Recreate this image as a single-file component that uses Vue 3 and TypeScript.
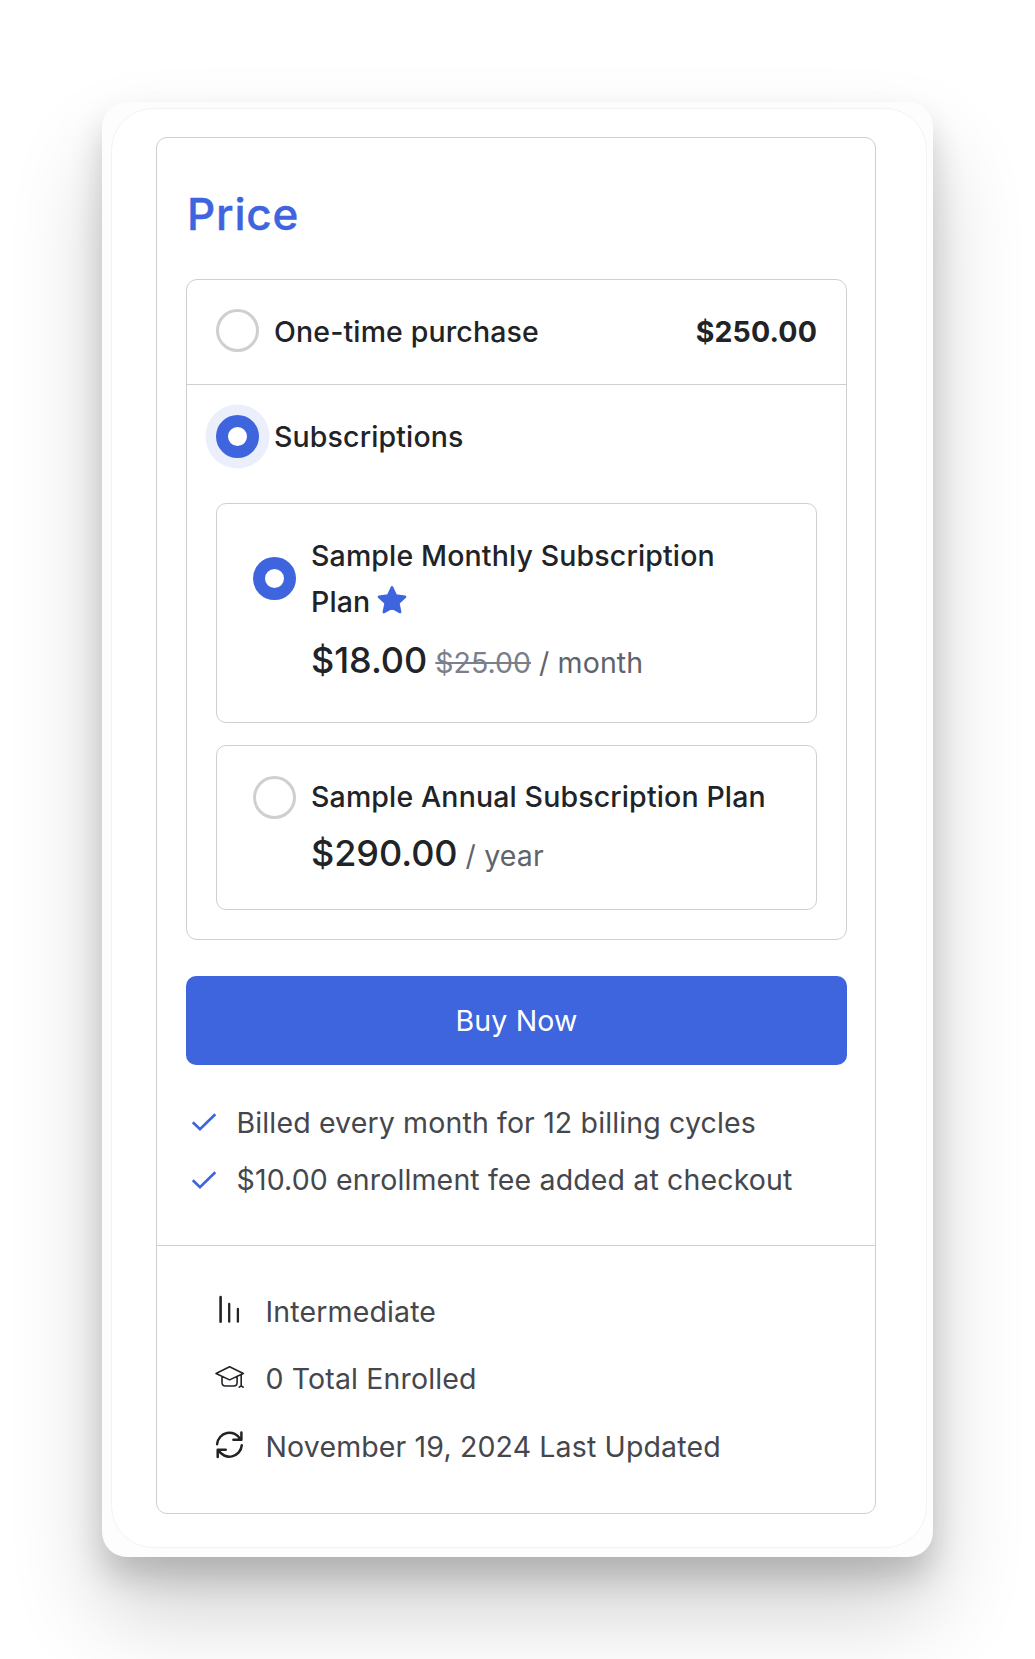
<script setup lang="ts">
import { ref } from 'vue'

interface Plan {
  id: string
  name: string
  price: string
  regular?: string
  period: string
  featured?: boolean
}

const plans: Plan[] = [
  { id: 'monthly', name: 'Sample Monthly Subscription Plan', price: '$18.00', regular: '$25.00', period: 'month', featured: true },
  { id: 'annual', name: 'Sample Annual Subscription Plan', price: '$290.00', period: 'year' },
]
const notes: string[] = ['Billed every month for 12 billing cycles', '$10.00 enrollment fee added at checkout']
const mode = ref<'once' | 'subscription'>('subscription')
const selected = ref('monthly')
</script>

<template>
  <main class="page">
    <div class="frame">
      <div class="surface">
        <section class="panel">
          <div class="pricing">
            <h2 class="title">Price</h2>
            <div class="options">
              <div class="option once" @click="mode = 'once'">
                <span class="radio" :class="{ on: mode === 'once' }"></span>
                <span class="label">One-time purchase</span>
                <strong class="amount">$250.00</strong>
              </div>
              <div class="option sub" @click="mode = 'subscription'">
                <span class="radio halo" :class="{ on: mode === 'subscription' }"></span>
                <span class="label">Subscriptions</span>
              </div>
              <div class="plans">
                <div v-for="p in plans" :key="p.id" class="plan" :class="p.id" @click="selected = p.id">
                  <span class="radio" :class="{ on: selected === p.id }"></span>
                  <div class="details">
                    <div class="name">
                      {{ p.name }}
                      <svg v-if="p.featured" class="star" viewBox="0 0 28 28">
                        <path d="M14 2.2 17.6 9.9 26.2 11 19.9 16.8 21.6 25.3 14 21.2 6.4 25.3 8.1 16.8 1.8 11 10.4 9.9Z" />
                      </svg>
                    </div>
                    <div class="cost"><span class="price">{{ p.price }}</span> <span v-if="p.regular" class="regular">{{ p.regular }}</span> <span class="period">/ {{ p.period }}</span></div>
                  </div>
                </div>
              </div>
            </div>
            <button class="buy" type="button">Buy Now</button>
            <ul class="notes">
              <li v-for="n in notes" :key="n">
                <svg class="check" viewBox="0 0 26 20"><path d="M1.8 10.2 9 17.2 24.3 2.2" /></svg>
                <span>{{ n }}</span>
              </li>
            </ul>
          </div>
          <ul class="meta">
            <li>
              <svg class="icon" viewBox="0 0 30 30">
                <path d="M5.6 2.1V26.7" stroke-width="2.6" />
                <path d="M14.2 8.9V26.7M22.9 14V26.7" stroke-width="2.3" />
              </svg>
              <span>Intermediate</span>
            </li>
            <li>
              <svg class="icon" viewBox="0 0 30 30">
                <path d="M1 11.5 14.6 4.8 28.3 11.5 14.6 17.9ZM7 14.4V20.6Q7 24 10.5 24H18.7Q22.1 24 22.1 20.6V14.4M26.2 12.6V23.9M24.3 25.2 26.2 23.8 28.1 25.2" stroke-width="1.6" />
              </svg>
              <span>0 Total Enrolled</span>
            </li>
            <li>
              <svg class="icon" viewBox="0 0 30 30">
                <path d="M2.1 14.2A12.4 12.4 0 0 1 25.4 9.3M26.4 2.6V9.7H18.4M26.8 15.2A12.4 12.4 0 0 1 3.5 20.1M2.7 26.9V19.7H10.7" stroke-width="2.5" />
              </svg>
              <span>November 19, 2024 Last Updated</span>
            </li>
          </ul>
        </section>
      </div>
    </div>
  </main>
</template>

<style>
body {
  background: #fff;
  overflow: hidden;
}
</style>

<style scoped>
* {
  box-sizing: border-box;
}
.page {
  width: 1035px;
  height: 1659px;
  padding: 102px 102px;
  overflow: hidden;
  font-family: Inter, "Liberation Sans", sans-serif;
  font-size: 28.5px;
  line-height: 46px;
  letter-spacing: 0.14px;
  color: #212327;
}
.frame {
  width: 831px;
  height: 1455px;
  padding: 6px 6px 9px 9px;
  border-radius: 25px;
  background: #fdfdfd;
  box-shadow: 0 20px 32px rgba(0, 0, 0, 0.17), 0 54px 92px rgba(0, 0, 0, 0.19);
}
.surface {
  height: 1440px;
  padding: 29px 0 0 45px;
  border: 1px solid #f3f3f3;
  border-radius: 42px;
  background: #fff;
}
.panel {
  width: 720px;
  height: 1377px;
  margin-left: -1px;
  margin-top: -1px;
  border: 1px solid #cdcfd3;
  border-radius: 11px;
}
.pricing {
  height: 1108px;
  padding: 47px 28px 0 29px;
  border-bottom: 1px solid #cdcfd3;
}
.title {
  margin: 0;
  height: 94px;
  padding-left: 1px;
  font-size: 44px;
  line-height: 58px;
  font-weight: 500;
  letter-spacing: 0.8px;
  -webkit-text-stroke: 0.4px #3e64de;
  color: #3e64de;
}
.options {
  height: 661px;
  border: 1px solid #cdcfd3;
  border-radius: 11px;
}
.option {
  display: flex;
  align-items: center;
  padding: 0 29px;
}
.once {
  height: 105px;
  padding-bottom: 3px;
  border-bottom: 1px solid #cdcfd3;
}
.once .label,
.amount {
  padding-top: 2px;
}
.sub {
  height: 105px;
  padding-bottom: 2px;
}
.radio {
  flex: none;
  width: 43px;
  height: 43px;
  margin-right: 15px;
  border: 3px solid #cfcfcf;
  border-radius: 50%;
}
.radio.on {
  border: 12px solid #3e64de;
}
.radio.halo {
  box-shadow: 0 0 0 10.5px #ebeefb;
}
.label,
.name {
  font-weight: 500;
}
.amount {
  margin-left: auto;
  font-weight: 700;
}
.plans {
  display: flex;
  flex-direction: column;
  gap: 22px;
  padding: 13px 29px 0;
}
.plan {
  display: flex;
  padding-left: 36px;
  border: 1px solid #cdcfd3;
  border-radius: 10px;
}
.monthly {
  height: 220px;
  padding-top: 29px;
}
.monthly .radio {
  margin-top: 24px;
}
.annual {
  height: 165px;
  padding-top: 28px;
}
.annual .radio {
  margin-top: 2px;
}
.details {
  width: 460px;
  white-space: nowrap;
}
.monthly .name {
  width: 420px;
  white-space: normal;
}
.star {
  width: 30px;
  height: 30px;
  margin-left: -0.8px;
  vertical-align: -3px;
  fill: #3e64de;
  stroke: #3e64de;
  stroke-width: 2.4;
  stroke-linejoin: round;
}
.cost {
  line-height: 58px;
  letter-spacing: 0;
  color: #5f636b;
}
.monthly .cost {
  padding-top: 6px;
}
.annual .cost {
  padding-top: 4px;
}
.period {
  letter-spacing: 0.14px;
}
.price {
  font-size: 36px;
  font-weight: 500;
  letter-spacing: -0.04px;
  color: #212327;
}
.regular {
  color: #7b7f8b;
  text-decoration: line-through;
}
.buy {
  display: block;
  width: 100%;
  height: 89px;
  margin-top: 36px;
  padding: 0;
  border: 0;
  border-radius: 10px;
  background: #3e64de;
  color: #fff;
  font: inherit;
  letter-spacing: inherit;
}
ul {
  margin: 0;
  padding: 0;
  list-style: none;
}
.notes {
  padding-top: 29px;
  color: #45474c;
}
.notes li {
  display: flex;
  align-items: center;
  height: 57.5px;
}
.check {
  width: 26px;
  height: 20px;
  margin: 0 19.5px 1px 5px;
  fill: none;
  stroke: #3e64de;
  stroke-width: 2.7;
}
.meta {
  padding: 32px 58px 0;
  color: #45474c;
}
.meta li {
  display: flex;
  align-items: center;
  height: 67.5px;
}
.icon {
  width: 30px;
  height: 30px;
  margin: 0 20.5px 4px 0;
  fill: none;
  stroke: #212327;
  stroke-linecap: round;
  stroke-linejoin: round;
}
</style>
